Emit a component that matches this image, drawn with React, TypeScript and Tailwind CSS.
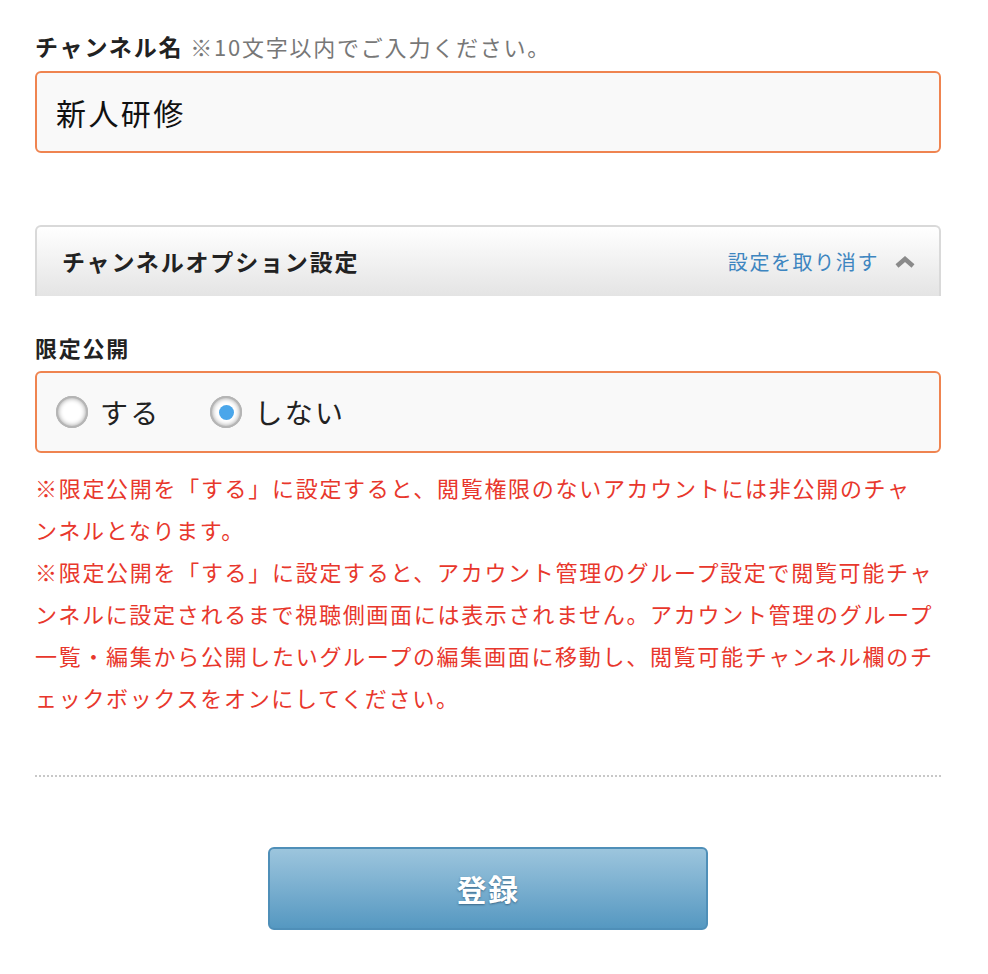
import { useState } from 'react';

const font = { fontFamily: '"Noto Sans CJK JP", "Noto Sans", sans-serif' };

function Radio({ checked, label, onClick }: { checked: boolean; label: string; onClick: () => void }) {
  return (
    <button type="button" onClick={onClick} className="flex items-center gap-[12px]">
      <span className="w-[32px] h-[32px] rounded-full bg-white flex items-center justify-center shadow-[inset_0_0_0_2px_#b5b5b5,inset_0_0_5px_2px_#9a9a9a]">
        {checked && <span className="w-[15px] h-[15px] rounded-full bg-[#4aa6ea]" />}
      </span>
      <span className="text-[28px] tracking-[0.08em] text-[#222]">{label}</span>
    </button>
  );
}

export default function App() {
  const [limited, setLimited] = useState(false);

  return (
    <div className="bg-white min-h-[974px] pl-[35px] pr-[47px] pt-[29px]" style={font}>
      <div className="flex items-baseline gap-[7px] h-[34px]">
        <span className="text-[23px] font-bold tracking-[0.08em] text-[#222]">チャンネル名</span>
        <span className="text-[22px] tracking-[0.08em] text-[#777]">※10文字以内でご入力ください。</span>
      </div>
      <div className="mt-[8px] h-[82px] border-2 border-[#ef8450] rounded-[6px] bg-[#f9f9f9] flex items-center px-[19px]">
        <span className="text-[30px] tracking-[0.08em] text-[#111]">新人研修</span>
      </div>

      <div className="mt-[72px] h-[71px] border-2 border-b-0 border-[#d9d9d9] rounded-t-[6px] bg-gradient-to-b from-white to-[#e4e4e4] flex items-center justify-between pl-[25px] pr-[24px]">
        <span className="text-[23px] font-bold tracking-[0.08em] text-[#222]">チャンネルオプション設定</span>
        <div className="flex items-center gap-[16px]">
          <span className="text-[20px] tracking-[0.08em] text-[#3d85c0]">設定を取り消す</span>
          <svg width="20" height="12" viewBox="0 0 20 12">
            <path d="M2 10 L10 3 L18 10" fill="none" stroke="#8a8a8a" strokeWidth="4.5" strokeLinejoin="miter" />
          </svg>
        </div>
      </div>

      <div className="mt-[36px] h-[30px] flex items-center">
        <span className="text-[22px] font-bold tracking-[0.08em] text-[#222]">限定公開</span>
      </div>
      <div className="mt-[9px] h-[82px] border-2 border-[#ef8450] rounded-[6px] bg-[#f9f9f9] flex items-center gap-[50px] px-[19px]">
        <Radio checked={limited} label="する" onClick={() => setLimited(true)} />
        <Radio checked={!limited} label="しない" onClick={() => setLimited(false)} />
      </div>

      <p className="mt-[13px] text-[22px] leading-[42px] tracking-[1.7px] text-[#e8372c] whitespace-nowrap">
        ※限定公開を「する」に設定すると、閲覧権限のないアカウントには非公開のチャ<br />
        ンネルとなります。<br />
        ※限定公開を「する」に設定すると、アカウント管理のグループ設定で閲覧可能チャ<br />
        ンネルに設定されるまで視聴側画面には表示されません。アカウント管理のグループ<br />
        一覧・編集から公開したいグループの編集画面に移動し、閲覧可能チャンネル欄のチ<br />
        ェックボックスをオンにしてください。
      </p>

      <div className="mt-[57px] border-t-2 border-dotted border-[#c8c8c8]" />

      <div className="mt-[70px] flex justify-center">
        <button
          type="button"
          className="w-[440px] h-[83px] rounded-[6px] border-2 border-[#4f8fb8] bg-gradient-to-b from-[#9cc5dd] to-[#5598c1] text-white text-[30px] font-bold tracking-[0.05em] [text-shadow:0_1px_2px_rgba(40,80,110,0.7)]"
        >
          登録
        </button>
      </div>
    </div>
  );
}
